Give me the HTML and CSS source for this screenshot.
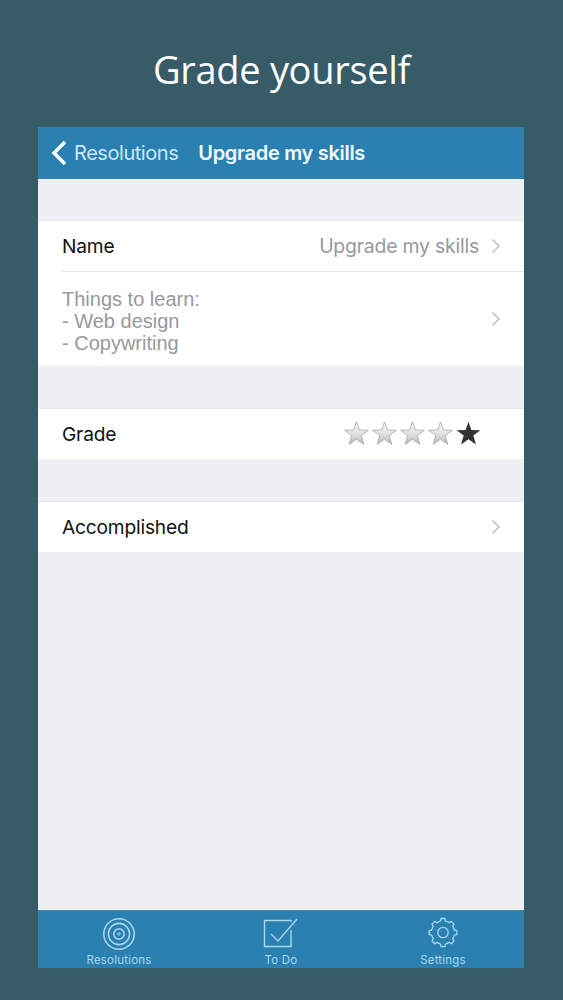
FILE: index.html
```html
<!DOCTYPE html>
<html lang="en">
<head>
<meta charset="utf-8">
<title>Grade yourself</title>
<link rel="stylesheet" href="styles.css">
</head>
<body>
<svg class="defs" width="0" height="0" aria-hidden="true">
  <defs>
    <linearGradient id="starfill" x1="0" y1="0" x2="0" y2="1">
      <stop offset="0" stop-color="#f2f2f2"/>
      <stop offset="0.5" stop-color="#e4e4e4"/>
      <stop offset="1" stop-color="#b8b8b8"/>
    </linearGradient>
    <path id="star" d="M12.5 0.8 L15.4 8.9 L24.4 9.2 L17.3 14.6 L19.9 23.4 L12.5 18.3 L5.1 23.4 L7.7 14.6 L0.6 9.2 L9.6 8.9 Z"/>
  </defs>
</svg>
<h1 class="headline">Grade yourself</h1>
<main class="phone">
  <header class="nav">
    <svg class="nav-back" width="16" height="26" viewBox="0 0 16 26"><path d="M14 2 L3 13 L14 24" fill="none" stroke="#fff" stroke-width="3.4"/></svg>
    <span class="nav-back-label">Resolutions</span>
    <span class="nav-title">Upgrade my skills</span>
  </header>
  <div class="content">
    <section class="group">
      <div class="row row-main">
        <span class="label">Name</span>
        <span class="value">Upgrade my skills</span>
        <svg class="chev" width="10" height="16" viewBox="0 0 10 16"><path d="M1.5 1.5 L8 8 L1.5 14.5" fill="none" stroke="#c4c4c8" stroke-width="1.6"/></svg>
      </div>
      <div class="row row-notes">
        <p class="notes">Things to learn:<br>- Web design<br>- Copywriting</p>
        <svg class="chev" width="10" height="16" viewBox="0 0 10 16"><path d="M1.5 1.5 L8 8 L1.5 14.5" fill="none" stroke="#c4c4c8" stroke-width="1.6"/></svg>
      </div>
    </section>
    <section class="group">
      <div class="row row-main">
        <span class="label">Grade</span>
        <div class="stars">
          <svg class="star" viewBox="0 0 25 24"><use href="#star" fill="url(#starfill)" stroke="#a8a8a8" stroke-width="0.8"/></svg>
          <svg class="star" viewBox="0 0 25 24"><use href="#star" fill="url(#starfill)" stroke="#a8a8a8" stroke-width="0.8"/></svg>
          <svg class="star" viewBox="0 0 25 24"><use href="#star" fill="url(#starfill)" stroke="#a8a8a8" stroke-width="0.8"/></svg>
          <svg class="star" viewBox="0 0 25 24"><use href="#star" fill="url(#starfill)" stroke="#a8a8a8" stroke-width="0.8"/></svg>
          <svg class="star" viewBox="0 0 25 24"><use href="#star" fill="#333338"/></svg>
        </div>
      </div>
    </section>
    <section class="group">
      <div class="row row-main">
        <span class="label">Accomplished</span>
        <svg class="chev chev-end" width="10" height="16" viewBox="0 0 10 16"><path d="M1.5 1.5 L8 8 L1.5 14.5" fill="none" stroke="#c4c4c8" stroke-width="1.6"/></svg>
      </div>
    </section>
  </div>
  <nav class="tabs">
    <div class="tab">
      <svg width="34" height="34" viewBox="0 0 34 34" fill="none" stroke="#a9d6ec" stroke-width="1.6">
        <circle cx="17" cy="17" r="15.2"/><circle cx="17" cy="17" r="10.6"/><circle cx="17" cy="17" r="5.2"/><circle cx="17" cy="17" r="1.2" stroke-width="1"/>
      </svg>
      <span class="tab-label">Resolutions</span>
    </div>
    <div class="tab">
      <svg width="36" height="34" viewBox="0 0 36 34" fill="none" stroke="#a9d6ec" stroke-width="1.4">
        <path d="M28 13 V29.5 H1.5 V3.5 H28 V5"/>
        <path d="M8 17 L15 24 L34 2"/>
      </svg>
      <span class="tab-label">To Do</span>
    </div>
    <div class="tab">
      <svg width="34" height="34" viewBox="0 0 34 34" fill="none" stroke="#a9d6ec" stroke-width="1.3" stroke-linejoin="round">
        <path d="M14.5 4 L15 1.5 H19 L19.5 4 Q21.5 4.6 23 5.7 L25.2 4.4 L28 7.2 L26.7 9.4 Q27.8 11 28.3 13 L30.8 13.6 V17.6 L28.3 18.2 Q27.8 20 26.7 21.7 L28 24 L25.2 26.8 L23 25.4 Q21.5 26.4 19.5 27 L19 29.6 H15 L14.5 27 Q12.5 26.4 11 25.4 L8.8 26.8 L6 24 L7.3 21.7 Q6.2 20 5.7 18.2 L3.2 17.6 V13.6 L5.7 13 Q6.2 11 7.3 9.4 L6 7.2 L8.8 4.4 L11 5.7 Q12.5 4.6 14.5 4 Z"/>
        <circle cx="17" cy="15.5" r="5.2"/>
      </svg>
      <span class="tab-label">Settings</span>
    </div>
  </nav>
</main>
</body>
</html>
```

FILE: styles.css
```css
* { box-sizing: border-box; }
html, body { margin: 0; padding: 0; }
body {
  width: 563px;
  height: 1000px;
  background: #375c68;
  overflow: hidden;
  display: flex;
  flex-direction: column;
  align-items: flex-start;
}
.defs { position: absolute; }
.headline {
  margin: 0;
  width: 563px;
  height: 127px;
  padding-top: 41px;
  text-align: center;
  font: 400 38px/56px "Open Sans", sans-serif;
  color: #fff;
  letter-spacing: -0.3px;
}
.phone {
  width: 486px;
  height: 841px;
  margin-left: 38px;
  display: flex;
  flex-direction: column;
  background: #efeff4;
}
.nav {
  height: 52px;
  flex: none;
  background: #2a80b1;
  display: flex;
  align-items: center;
  padding-left: 13px;
}
.nav-back { flex: none; }
.nav-back-label {
  margin-left: 7px;
  font: 400 20px/24px Inter, sans-serif;
  color: #cfe6f2;
  letter-spacing: -0.45px;
}
.nav-title {
  margin-left: 20px;
  font: 600 20px/24px Inter, sans-serif;
  color: #f2f9fc;
  letter-spacing: -0.3px;
}
.content {
  flex: 1;
  padding-top: 41px;
  display: flex;
  flex-direction: column;
  gap: 42px;
}
.group {
  background: #fff;
  border-top: 1px solid #e6e6ea;
}
.row {
  display: flex;
  align-items: center;
  margin-left: 24px;
  padding-right: 24px;
}
.row-main { height: 50px; }
.row-notes {
  height: 95px;
  border-top: 1px solid #e6e6ea;
  justify-content: space-between;
}
.notes { padding-top: 4px; }
.label {
  font: 400 19.2px/24px Inter, sans-serif;
  color: #111;
  letter-spacing: -0.2px;
}
.value {
  margin-left: auto;
  margin-right: 12px;
  font: 400 19.4px/24px Inter, sans-serif;
  color: #98989d;
  letter-spacing: -0.2px;
}
.notes {
  margin: 0;
  font: 400 20px/22px "Liberation Sans", sans-serif;
  color: #98989d;
}
.chev { flex: none; margin-right: -1px; }
.chev-end { margin-left: auto; }
.stars {
  margin-left: auto;
  margin-right: 19px;
  margin-top: -3px;
  display: flex;
  gap: 3px;
}
.star { width: 25px; height: 24px; display: block; }
.tabs {
  height: 58px;
  flex: none;
  background: #2a80b1;
  border-top: 1px solid #3d8fa8;
  display: grid;
  grid-template-columns: 162px 162px 162px;
}
.tab {
  display: flex;
  flex-direction: column;
  align-items: center;
  padding-top: 6px;
  gap: 2px;
}
.tab-label {
  font: 400 11.5px/14px Inter, sans-serif;
  color: #a9d6ec;
  letter-spacing: 0.2px;
}
```
